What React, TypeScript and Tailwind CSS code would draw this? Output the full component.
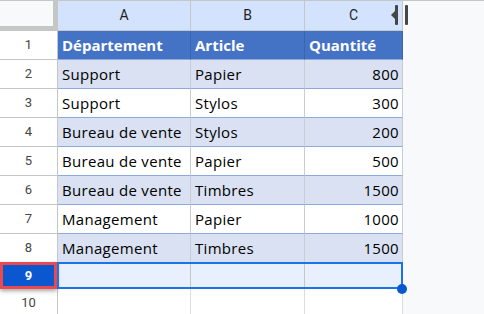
import React from "react";

const rows: [string, string, string][] = [
  ["Support", "Papier", "800"],
  ["Support", "Stylos", "300"],
  ["Bureau de vente", "Stylos", "200"],
  ["Bureau de vente", "Papier", "500"],
  ["Bureau de vente", "Timbres", "1500"],
  ["Management", "Papier", "1000"],
  ["Management", "Timbres", "1500"],
];

const grid = "grid grid-cols-[58px_133px_114px_98px_1fr]";
const rh =
  "flex items-center justify-center border-r border-b border-[#c4c7c5] bg-white text-[13px] text-[#444746]";
const cellFont = { fontFamily: '"Open Sans", "Noto Sans", sans-serif', letterSpacing: "0.3px" };

export default function App() {
  return (
    <div
      className="relative w-[484px] h-[314px] overflow-hidden bg-[#f8f9fa]"
      style={{ fontFamily: 'Roboto, "Liberation Sans", Arial, sans-serif' }}
    >
      {/* column header row */}
      <div className={`${grid} h-[31px] border-t border-[#c4c7c5]`}>
        <div className="bg-[#f8f9fa] border-r-[5px] border-b-[5px] border-[#c4c7c5]" />
        {["A", "B", "C"].map((c) => (
          <div
            key={c}
            className="flex items-center justify-center bg-[#d3e3fd] border-r border-b border-[#c4c7c5] text-[14px] text-[#1f1f1f]"
          >
            {c}
          </div>
        ))}
        <div className="bg-[#f8f9fa]" />
      </div>

      {/* header data row */}
      <div className={`${grid} h-[29px]`}>
        <div className={rh}>1</div>
        {["Département", "Article", "Quantité"].map((t) => (
          <div
            key={t}
            className="flex items-center pl-[4px] bg-[#4472c4] border-r border-b border-r-[#3b64ae] border-b-[#8ea9db] text-[15px] font-bold text-white"
            style={{ ...cellFont, letterSpacing: "0px" }}
          >
            {t}
          </div>
        ))}
        <div />
      </div>

      {rows.map((r, i) => {
        const band = i % 2 === 0 ? "bg-[#d9e1f2]" : "bg-white";
        return (
          <div key={i} className={`${grid} h-[29px]`}>
            <div className={rh}>{i + 2}</div>
            <div
              className={`flex items-center pl-[4px] ${band} border-r border-b border-r-[#c8ccd4] border-b-[#8ea9db] text-[15px] text-black whitespace-nowrap overflow-hidden`}
              style={cellFont}
            >
              {r[0]}
            </div>
            <div
              className={`flex items-center pl-[4px] ${band} border-r border-b border-r-[#c8ccd4] border-b-[#8ea9db] text-[15px] text-black whitespace-nowrap overflow-hidden`}
              style={cellFont}
            >
              {r[1]}
            </div>
            <div
              className={`flex items-center justify-end pr-[3px] ${band} border-r border-b border-r-[#c8ccd4] border-b-[#8ea9db] text-[15px] text-black`}
              style={cellFont}
            >
              {r[2]}
            </div>
            <div />
          </div>
        );
      })}

      {/* row 9 (selected) */}
      <div className={`${grid} h-[26px]`}>
        <div className="relative flex items-center justify-center bg-white border-r border-b border-[#c4c7c5]">
          <div className="absolute left-0 top-[-1px] w-[57px] h-[27px] border-[3px] border-[#ea4a4f] bg-[#0b57d0] shadow-[0_2px_4px_rgba(0,0,0,0.35)] flex items-center justify-center text-[13px] font-bold text-white">
            9
          </div>
        </div>
        <div className="bg-[#e8f0fe] border-r border-b border-[#c4c7c5]" />
        <div className="bg-[#e8f0fe] border-r border-b border-[#c4c7c5]" />
        <div className="bg-[#e8f0fe] border-r border-b border-[#c4c7c5]" />
        <div />
      </div>

      {/* row 10 */}
      <div className={`${grid} h-[29px]`}>
        <div className={rh}>10</div>
        <div className="bg-white border-r border-b border-[#dadce0]" />
        <div className="bg-white border-r border-b border-[#dadce0]" />
        <div className="bg-white border-r border-b border-[#dadce0]" />
        <div />
      </div>

      {/* selection overlay A9:C9 */}
      <div className="absolute left-[57px] top-[262px] w-[346px] h-[27px] border-2 border-[#1a73e8] pointer-events-none" />
      <div className="absolute left-[397px] top-[284px] w-[10px] h-[10px] rounded-full bg-[#0b57d0]" />

      {/* column resize handle */}
      <svg
        className="absolute left-[389px] top-[4px]"
        width="22"
        height="22"
        viewBox="0 0 22 22"
      >
        <polygon points="2,11 6,7 6,15" fill="#444746" />
        <rect x="6" y="1" width="3" height="20" rx="1" fill="#444746" />
        <rect x="16" y="1" width="3" height="20" rx="1" fill="#444746" />
      </svg>
    </div>
  );
}
